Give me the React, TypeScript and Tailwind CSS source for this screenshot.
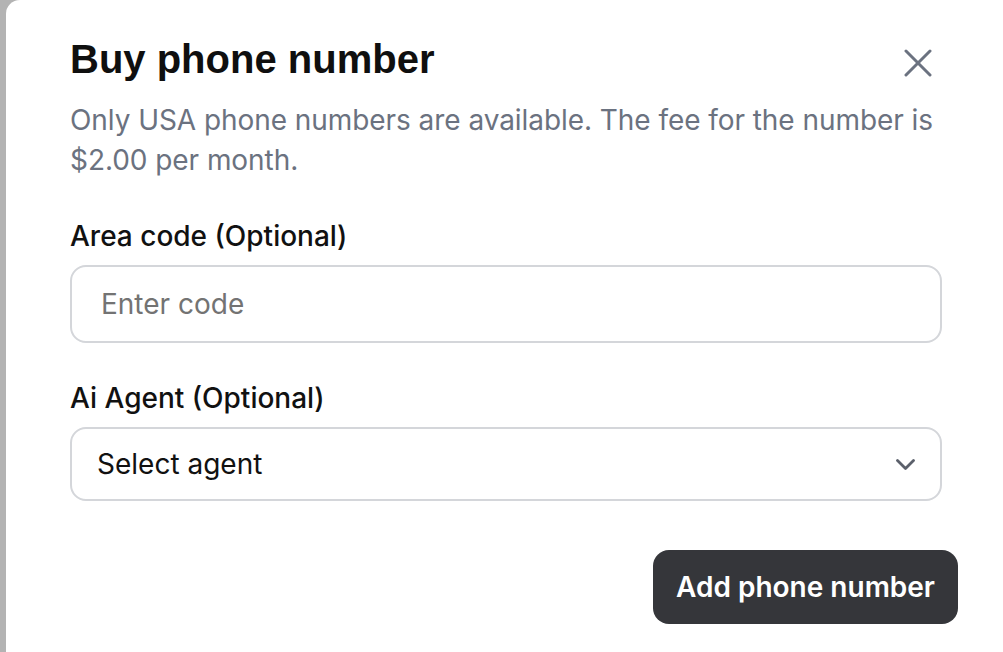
import React from 'react';

const font = { fontFamily: 'Inter, "Noto Sans", sans-serif' };

const BuyNumberDialog = () => {
  return (
    <div className="flex-1 bg-white rounded-tl-[14px] pl-[64px] pr-[45px] pt-[37px]">
      <div className="flex items-start justify-between pr-[26px]">
        <h2 className="text-[40px] leading-[44px] font-bold text-[#0f0f0f] font-['Liberation_Sans',Arial,sans-serif]">
          Buy phone number
        </h2>
        <button className="mt-[12px] text-[#6b7280]">
          <svg width="28" height="28" viewBox="0 0 28 28" fill="none" stroke="currentColor" strokeWidth="3" strokeLinecap="round">
            <path d="M2 2 26 26" />
            <path d="M26 2 2 26" />
          </svg>
        </button>
      </div>
      <p className="mt-[19px] text-[28px] leading-[40px] tracking-[-0.06px] text-[#6b7280] pr-[16px]">
        Only USA phone numbers are available. The fee for the number is $2.00 per month.
      </p>

      <label className="block mt-[38px] text-[28px] leading-[36px] font-medium text-[#111111]">
        Area code (Optional)
      </label>
      <div className="mt-[11px] mr-[16px] h-[78px] rounded-[16px] border-2 border-[#d4d6da] flex items-center px-[29px]">
        <span className="text-[28px] text-[#737373]">Enter code</span>
      </div>

      <label className="block mt-[37px] text-[28px] leading-[36px] font-medium text-[#111111]">
        Ai Agent (Optional)
      </label>
      <div className="mt-[11px] mr-[16px] h-[74px] rounded-[16px] border-2 border-[#d4d6da] flex items-center justify-between pl-[25px] pr-[25px]">
        <span className="text-[28px] text-[#111111]">Select agent</span>
        <svg width="19" height="11" viewBox="0 0 19 11" fill="none" stroke="#5b606b" strokeWidth="2.8" strokeLinecap="round" strokeLinejoin="round">
          <path d="M1.5 1.5 9.5 9.5 17.5 1.5" />
        </svg>
      </div>

      <div className="flex justify-end mt-[49px]">
        <button className="h-[74px] px-[23px] rounded-[16px] bg-[#35363a] text-white text-[28px] font-semibold">
          Add phone number
        </button>
      </div>
    </div>
  );
};

export default function App() {
  return (
    <div className="flex w-[1003px] h-[652px] overflow-hidden bg-[#b3b3b3]" style={font}>
      <div className="w-[6px] shrink-0" />
      <BuyNumberDialog />
    </div>
  );
}
